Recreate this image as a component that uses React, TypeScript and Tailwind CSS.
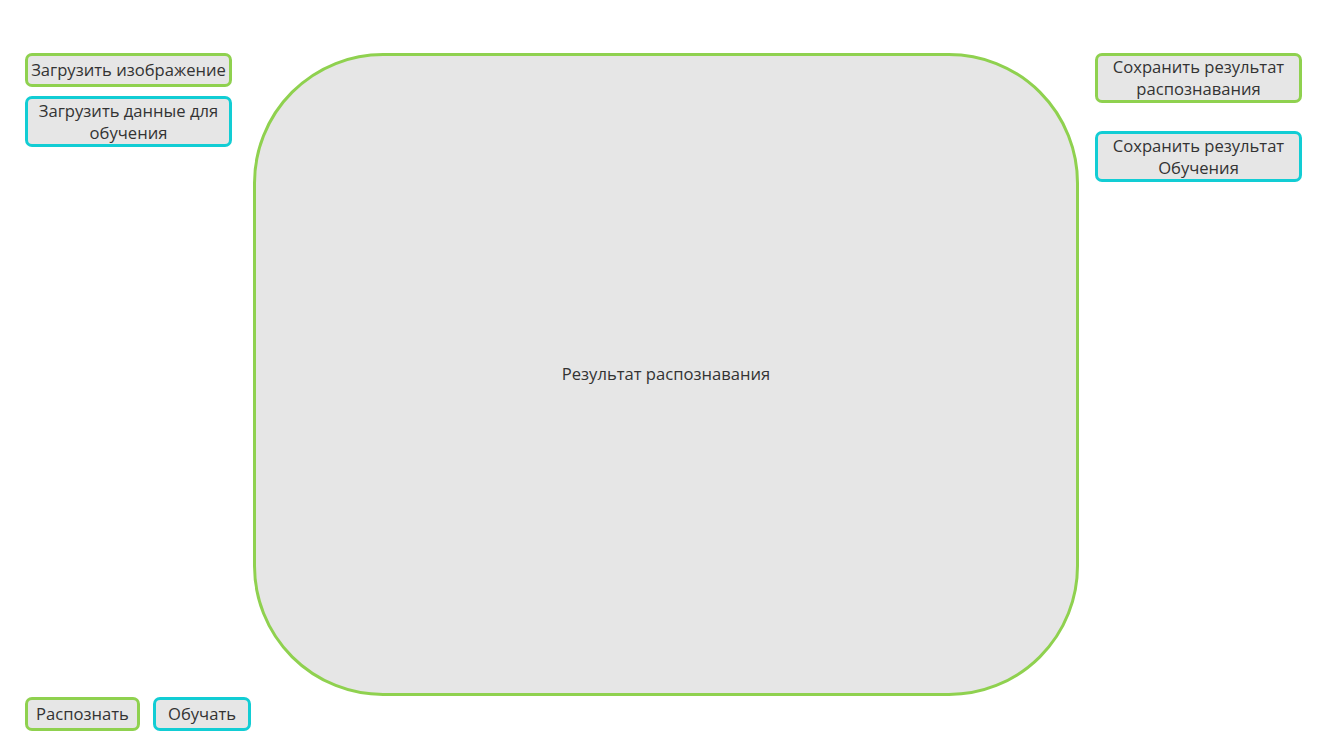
import React from "react";

type BtnProps = {
  label: React.ReactNode;
  tone: "green" | "cyan";
  className?: string;
};

const Btn: React.FC<BtnProps> = ({ label, tone, className = "" }) => (
  <button
    className={
      "shrink-0 rounded-[7px] border-[3px] bg-[#e6e6e6] text-center text-[16.6px] leading-[22px] text-[#333333] " +
      (tone === "green" ? "border-[#8fd14f] " : "border-[#12cdd4] ") +
      className
    }
  >
    {label}
  </button>
);

export default function App() {
  return (
    <div
      className="flex h-[749px] w-[1333px] items-start bg-white pt-[53px] pl-[25px]"
      style={{ fontFamily: '"Open Sans", "Noto Sans", sans-serif' }}
    >
      {/* left column */}
      <div className="flex h-[678px] w-[207px] shrink-0 flex-col justify-between">
        <div className="flex flex-col gap-[9px]">
          <Btn tone="green" label="Загрузить изображение" className="h-[34px] w-[207px] whitespace-nowrap px-0" />
          <Btn
            tone="cyan"
            label={
              <>
                Загрузить данные для
                <br />
                обучения
              </>
            }
            className="h-[51px] w-[207px]"
          />
        </div>
        <div className="flex flex-row gap-[13px]">
          <Btn tone="green" label="Распознать" className="h-[34px] w-[115px]" />
          <Btn tone="cyan" label="Обучать" className="h-[34px] w-[98px]" />
        </div>
      </div>

      {/* main panel */}
      <div className="ml-[21px] flex h-[643px] w-[826px] shrink-0 items-center justify-center rounded-[130px] border-[3px] border-[#8fd14f] bg-[#e6e6e6] text-[16.6px] text-[#333333]">
        Результат распознавания
      </div>

      {/* right column */}
      <div className="ml-[16px] flex w-[207px] shrink-0 flex-col gap-[28px]">
        <Btn
          tone="green"
          label={
            <>
              Сохранить результат
              <br />
              распознавания
            </>
          }
          className="h-[50px] w-[207px]"
        />
        <Btn
          tone="cyan"
          label={
            <>
              Сохранить результат
              <br />
              Обучения
            </>
          }
          className="h-[51px] w-[207px]"
        />
      </div>
    </div>
  );
}
